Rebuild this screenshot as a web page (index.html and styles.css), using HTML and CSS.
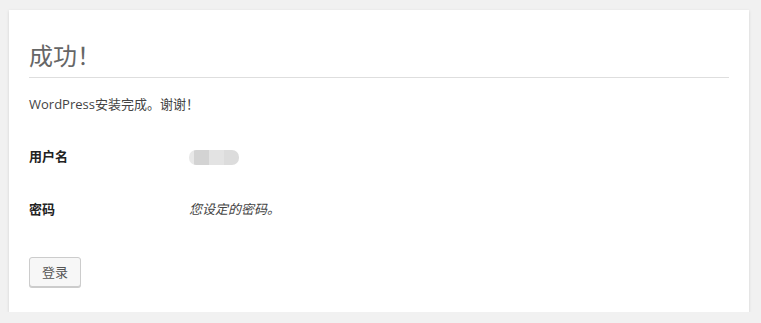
FILE: index.html
```html
<!DOCTYPE html>
<html lang="zh-CN">
<head>
  <meta charset="UTF-8">
  <title>WordPress › 安装</title>
  <link rel="stylesheet" href="styles.css">
</head>
<body>
  <div class="card">
    <h1>成功！</h1>
    <p class="intro">WordPress安装完成。谢谢！</p>

    <div class="form-table">
      <div class="label">用户名</div>
      <div class="value"><span class="blurred"></span></div>
      <div class="label">密码</div>
      <div class="value"><em>您设定的密码。</em></div>
    </div>

    <a class="button" href="#">登录</a>
  </div>
</body>
</html>
```

FILE: styles.css
```css
body {
  margin: 0;
  padding: 10px 12px 0 9px;
  background: #f1f1f1;
  color: #444;
  font-family: "Open Sans", "Noto Sans CJK SC", sans-serif;
  font-size: 13px;
}
.card {
  background: white;
  padding: 30px 20px 25px;
  box-shadow: 0 1px 3px rgba(0, 0, 0, 0.13);
}
h1 {
  margin: 0;
  padding-bottom: 6px;
  border-bottom: 1px solid #dedede;
  color: #666;
  font-size: 24px;
  font-weight: normal;
  line-height: 31px;
}
.intro {
  margin: 17px 0 0;
  line-height: 19px;
}
.form-table {
  display: grid;
  grid-template-columns: 160px 1fr;
  grid-auto-rows: 53px;
  align-items: center;
  margin: 15px 0 22px;
}
.label {
  font-weight: 600;
  color: #222;
}
.value em {
  font-style: italic;
}
.blurred {
  display: inline-block;
  width: 50px;
  height: 15px;
  border-radius: 7px;
  vertical-align: middle;
  background: linear-gradient(to right, #e8e8e8 0, #e8e8e8 5px, #d3d3d3 5px, #d3d3d3 20px, #e3e3e3 20px, #e3e3e3 35px, #dcdcdc 35px);
}
.button {
  display: inline-block;
  height: 30px;
  line-height: 28px;
  padding: 0 12px;
  border: 1px solid #ccc;
  border-radius: 3px;
  background: #f7f7f7;
  box-shadow: 0 1px 0 #ccc;
  color: #555;
  text-decoration: none;
  font-size: 13px;
  box-sizing: border-box;
}
```
